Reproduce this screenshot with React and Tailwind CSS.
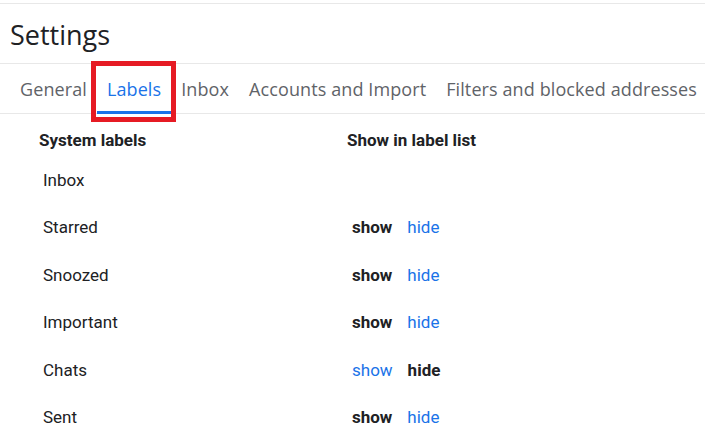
export default function App() {
  const tabs = ["General", "Labels", "Inbox", "Accounts and Import", "Filters and blocked addresses"];
  const rows = [
    { name: "Inbox", state: null },
    { name: "Starred", state: "show" },
    { name: "Snoozed", state: "show" },
    { name: "Important", state: "show" },
    { name: "Chats", state: "hide" },
    { name: "Sent", state: "show" },
  ];

  return (
    <div className="w-[705px] h-[444px] overflow-hidden bg-white">
      <div className="mt-[3px] border-t border-[#e8e8e8]" />
      <h1 className="h-[59px] pl-[10px] pt-[14px] text-[27px] leading-[34px] text-[#202124] font-['Open_Sans',sans-serif]">
        Settings
      </h1>
      <div className="flex border-y border-[#e8e8e8] h-[51px] pl-[10px] font-['Open_Sans',sans-serif] text-[18px] tracking-[0.1px] whitespace-nowrap">
        {tabs.map((t) => (
          <div key={t} className="relative flex items-center px-[10px] pt-[2px]">
            <span className={t === "Labels" ? "text-[#1a73e8]" : "text-[#5f6368]"}>{t}</span>
            {t === "Labels" && (
              <>
                <div className="absolute left-0 right-0 bottom-[-1px] h-[3px] bg-[#1a73e8]" />
                <div className="absolute left-[-6px] right-[-5px] top-[-3px] bottom-[-9px] border-[5px] border-[#e61b24]" />
              </>
            )}
          </div>
        ))}
      </div>
      <div className="font-['Roboto',sans-serif] text-[#202124]">
        <div className="grid grid-cols-[308px_1fr] pl-[39px] pt-[16px] text-[17px] font-bold leading-[20px]">
          <div>System labels</div>
          <div>Show in label list</div>
        </div>
        <div className="pt-[7px]">
          {rows.map((r) => (
            <div key={r.name} className="grid grid-cols-[309px_1fr] h-[47.4px] items-center pl-[43px] text-[17px]">
              <div>{r.name}</div>
              <div className="flex gap-[15px]">
                {r.state && (
                  <>
                    <span className={r.state === "show" ? "font-bold" : "text-[#1a73e8]"}>show</span>
                    <span className={r.state === "hide" ? "font-bold" : "text-[#1a73e8]"}>hide</span>
                  </>
                )}
              </div>
            </div>
          ))}
        </div>
      </div>
    </div>
  );
}
